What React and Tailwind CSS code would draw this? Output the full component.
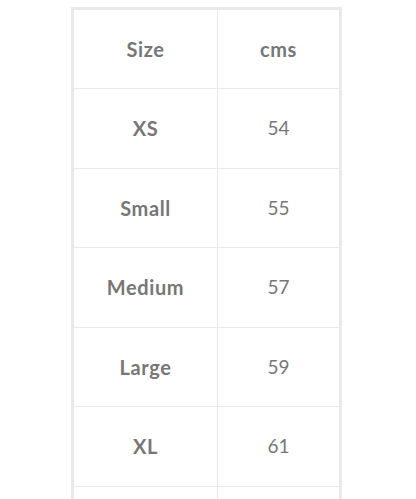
import React from 'react';

const rows = [
  { size: 'XS', cms: 54 },
  { size: 'Small', cms: 55 },
  { size: 'Medium', cms: 57 },
  { size: 'Large', cms: 59 },
  { size: 'XL', cms: 61 },
  { size: '', cms: '' },
];

export default function App() {
  return (
    <div className="h-screen overflow-hidden bg-white pt-[7px] pl-[71px]" style={{ fontFamily: 'Lato, "Open Sans", sans-serif' }}>
      <table className="w-[271px] border-collapse border-[3px] border-[#e9e9e9] text-[#777777] text-[19px]">
        <thead>
          <tr className="h-[80px]">
            <th className="w-[145px] border border-[#e9e9e9] text-[20px] font-bold tracking-[0.6px]">Size</th>
            <th className="border border-[#e9e9e9] text-[20px] font-bold tracking-[0.6px]">cms</th>
          </tr>
        </thead>
        <tbody>
          {rows.map((r, i) => (
            <tr key={i} className="h-[79.5px]">
              <td className="border border-[#e9e9e9] text-center text-[20px] font-bold tracking-[0.6px]">{r.size}</td>
              <td className="border border-[#e9e9e9] text-center font-normal">{r.cms}</td>
            </tr>
          ))}
        </tbody>
      </table>
    </div>
  );
}
